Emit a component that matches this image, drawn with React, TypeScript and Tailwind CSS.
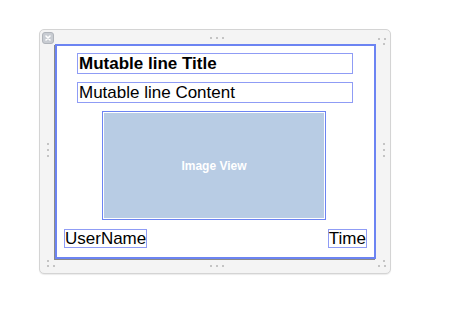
import React from "react";

const Dot = () => <div className="w-[2px] h-[2px] bg-[#c4c4c4]" />;

export default function App() {
  return (
    <div className="w-[460px] h-[321px] bg-white relative" style={{ fontFamily: "'Liberation Sans', Arial, sans-serif" }}>
      <div className="absolute left-[39px] top-[29px] w-[352px] h-[245px] rounded-[5px] border border-[#d4d4d4] bg-[#f4f4f4] shadow-[0_1px_1px_rgba(0,0,0,0.08)]">
        {/* close button */}
        <div className="absolute left-[2px] top-[2px] w-[12px] h-[12px] rounded-[3px] bg-[#c8ccd2] border border-[#b0b4ba] flex items-center justify-center">
          <svg width="8" height="8" viewBox="0 0 8 8"><path d="M2 2 L6 6 M6 2 L2 6" stroke="white" strokeWidth="1.6" strokeLinecap="round" /></svg>
        </div>
        {/* handle dots */}
        <div className="absolute left-[170px] top-[7px] flex gap-[4px]"><Dot /><Dot /><Dot /></div>
        <div className="absolute left-[170px] top-[235px] flex gap-[4px]"><Dot /><Dot /><Dot /></div>
        <div className="absolute left-[7px] top-[113px] flex flex-col gap-[4px]"><Dot /><Dot /><Dot /></div>
        <div className="absolute left-[343px] top-[113px] flex flex-col gap-[4px]"><Dot /><Dot /><Dot /></div>
        <div className="absolute left-[338px] top-[8px] flex gap-[4px]"><Dot /><Dot /></div>
        <div className="absolute left-[343px] top-[13px]"><Dot /></div>
        <div className="absolute left-[7px] top-[230px]"><Dot /></div>
        <div className="absolute left-[7px] top-[235px] flex gap-[4px]"><Dot /><Dot /></div>
        <div className="absolute left-[343px] top-[230px]"><Dot /></div>
        <div className="absolute left-[338px] top-[235px] flex gap-[4px]"><Dot /><Dot /></div>

        {/* content view */}
        <div className="absolute left-[15px] top-[14px] w-[321px] h-[215px] bg-white border-2 border-[#6c84f2] shadow-[-1px_1px_0_#8a8a8a] flex flex-col">
          <div className="ml-[20px] mt-[7px] w-[276px] h-[21px] border border-[#8f9cf5] text-[17px] leading-[19px] font-bold text-black pl-[1px]">Mutable line Title</div>
          <div className="ml-[20px] mt-[8px] w-[276px] h-[21px] border border-[#8f9cf5] text-[17px] leading-[19px] text-black pl-[1px]">Mutable line Content</div>
          <div className="ml-[45px] mt-[8px] w-[224px] h-[109px] border border-[#6c84f2] p-[1px]">
            <div className="w-full h-full bg-[#b8cce4] flex items-center justify-center text-white font-bold text-[12px]">Image View</div>
          </div>
          <div className="flex justify-between mt-[9px] ml-[7px] mr-[7px]">
            <div className="h-[19px] border border-[#8f9cf5] text-[17px] leading-[17px] text-black">UserName</div>
            <div className="h-[19px] border border-[#8f9cf5] text-[17px] leading-[17px] text-black">Time</div>
          </div>
        </div>
      </div>
    </div>
  );
}
